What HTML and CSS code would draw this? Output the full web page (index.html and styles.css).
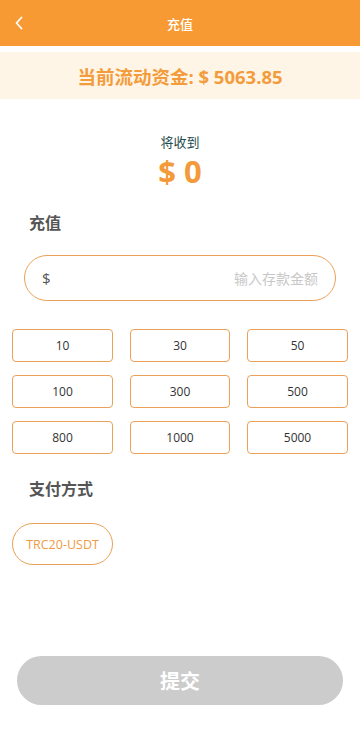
FILE: index.html
```html
<!DOCTYPE html>
<html lang="zh">
<head>
<meta charset="utf-8">
<meta name="viewport" content="width=device-width, initial-scale=1">
<title>充值</title>
<link rel="stylesheet" href="styles.css">
</head>
<body>
<header class="topbar">
  <span class="back"><svg width="12" height="16" viewBox="0 0 12 16"><path d="M8.5 2.5 L3.5 8 L8.5 13.5" fill="none" stroke="#fff" stroke-width="1.8" stroke-linecap="round" stroke-linejoin="round"/></svg></span>
  <h1 class="title">充值</h1>
</header>
<div class="balance">当前流动资金: $ 5063.85</div>
<section class="receive">
  <div class="receive-label">将收到</div>
  <div class="receive-amount">$ 0</div>
</section>
<h2 class="section-title">充值</h2>
<div class="input-wrap">
  <span class="currency">$</span>
  <input class="amount-input" type="text" placeholder="输入存款金额">
</div>
<div class="grid">
  <button class="chip">10</button>
  <button class="chip">30</button>
  <button class="chip">50</button>
  <button class="chip">100</button>
  <button class="chip">300</button>
  <button class="chip">500</button>
  <button class="chip">800</button>
  <button class="chip">1000</button>
  <button class="chip">5000</button>
</div>
<h2 class="section-title pay-title">支付方式</h2>
<div class="methods">
  <button class="method">TRC20-USDT</button>
</div>
<div class="submit-wrap">
  <button class="submit">提交</button>
</div>
</body>
</html>
```
FILE: styles.css
```css
* { box-sizing: border-box; }
html, body { margin: 0; padding: 0; background: #fff; }
body {
  width: 360px;
  min-height: 740px;
  font-family: "Open Sans", "Noto Sans CJK SC", sans-serif;
  color: #333;
}
.topbar {
  height: 46px;
  background: #f89a34;
  display: flex;
  align-items: center;
  justify-content: center;
  position: relative;
}
.back {
  position: absolute;
  left: 13px;
  top: 15px;
  display: flex;
}
.title {
  margin: 0;
  font-size: 13px;
  font-weight: 500;
  color: #fff;
}
.balance {
  margin-top: 6px;
  height: 47px;
  background: #fff5e7;
  color: #f39c3c;
  font-size: 18.5px;
  font-weight: 700;
  display: flex;
  align-items: center;
  justify-content: center;
}
.receive {
  display: flex;
  flex-direction: column;
  align-items: center;
  padding-top: 34px;
}
.receive-label {
  font-size: 13px;
  color: #1e4b4b;
  line-height: 18px;
  margin-bottom: 2px;
}
.receive-amount {
  font-size: 31px;
  font-weight: 700;
  color: #f39a3a;
  line-height: 36px;
}
.section-title {
  margin: 0;
  padding-left: 29px;
  font-size: 16px;
  font-weight: 700;
  color: #555;
  line-height: 22px;
}
.receive + .section-title { margin-top: 23px; }
.input-wrap {
  margin: 21px 24px 0 24px;
  height: 46px;
  border: 1px solid #eba157;
  border-radius: 23px;
  display: flex;
  align-items: center;
  padding: 0 15px 0 17px;
}
.currency {
  font-size: 15px;
  color: #555;
}
.amount-input {
  flex: 1;
  border: none;
  outline: none;
  text-align: right;
  font-family: inherit;
  font-size: 14px;
  color: #333;
  background: transparent;
  min-width: 0;
}
.amount-input::placeholder { color: #c8c8c8; }
.grid {
  margin: 28px 12px 0 12px;
  display: grid;
  grid-template-columns: 101px 100px 101px;
  justify-content: space-between;
  row-gap: 13px;
}
.chip {
  height: 33px;
  border: 1px solid #eba157;
  border-radius: 4px;
  background: #fff;
  font-family: inherit;
  font-size: 12px;
  color: #333;
  padding: 0;
}
.pay-title { margin-top: 24px; }
.methods {
  margin: 23px 12px 0 12px;
  display: flex;
}
.method {
  width: 101px;
  height: 42px;
  border: 1px solid #eba157;
  border-radius: 21px;
  background: #fff;
  font-family: inherit;
  font-size: 12.5px;
  color: #ef9a45;
  padding: 0;
}
.submit-wrap {
  margin-top: 91px;
  padding: 0 17px;
}
.submit {
  width: 100%;
  height: 49px;
  border: none;
  border-radius: 25px;
  background: #cccccc;
  color: #fff;
  font-family: inherit;
  font-size: 20px;
  font-weight: 700;
}
```
